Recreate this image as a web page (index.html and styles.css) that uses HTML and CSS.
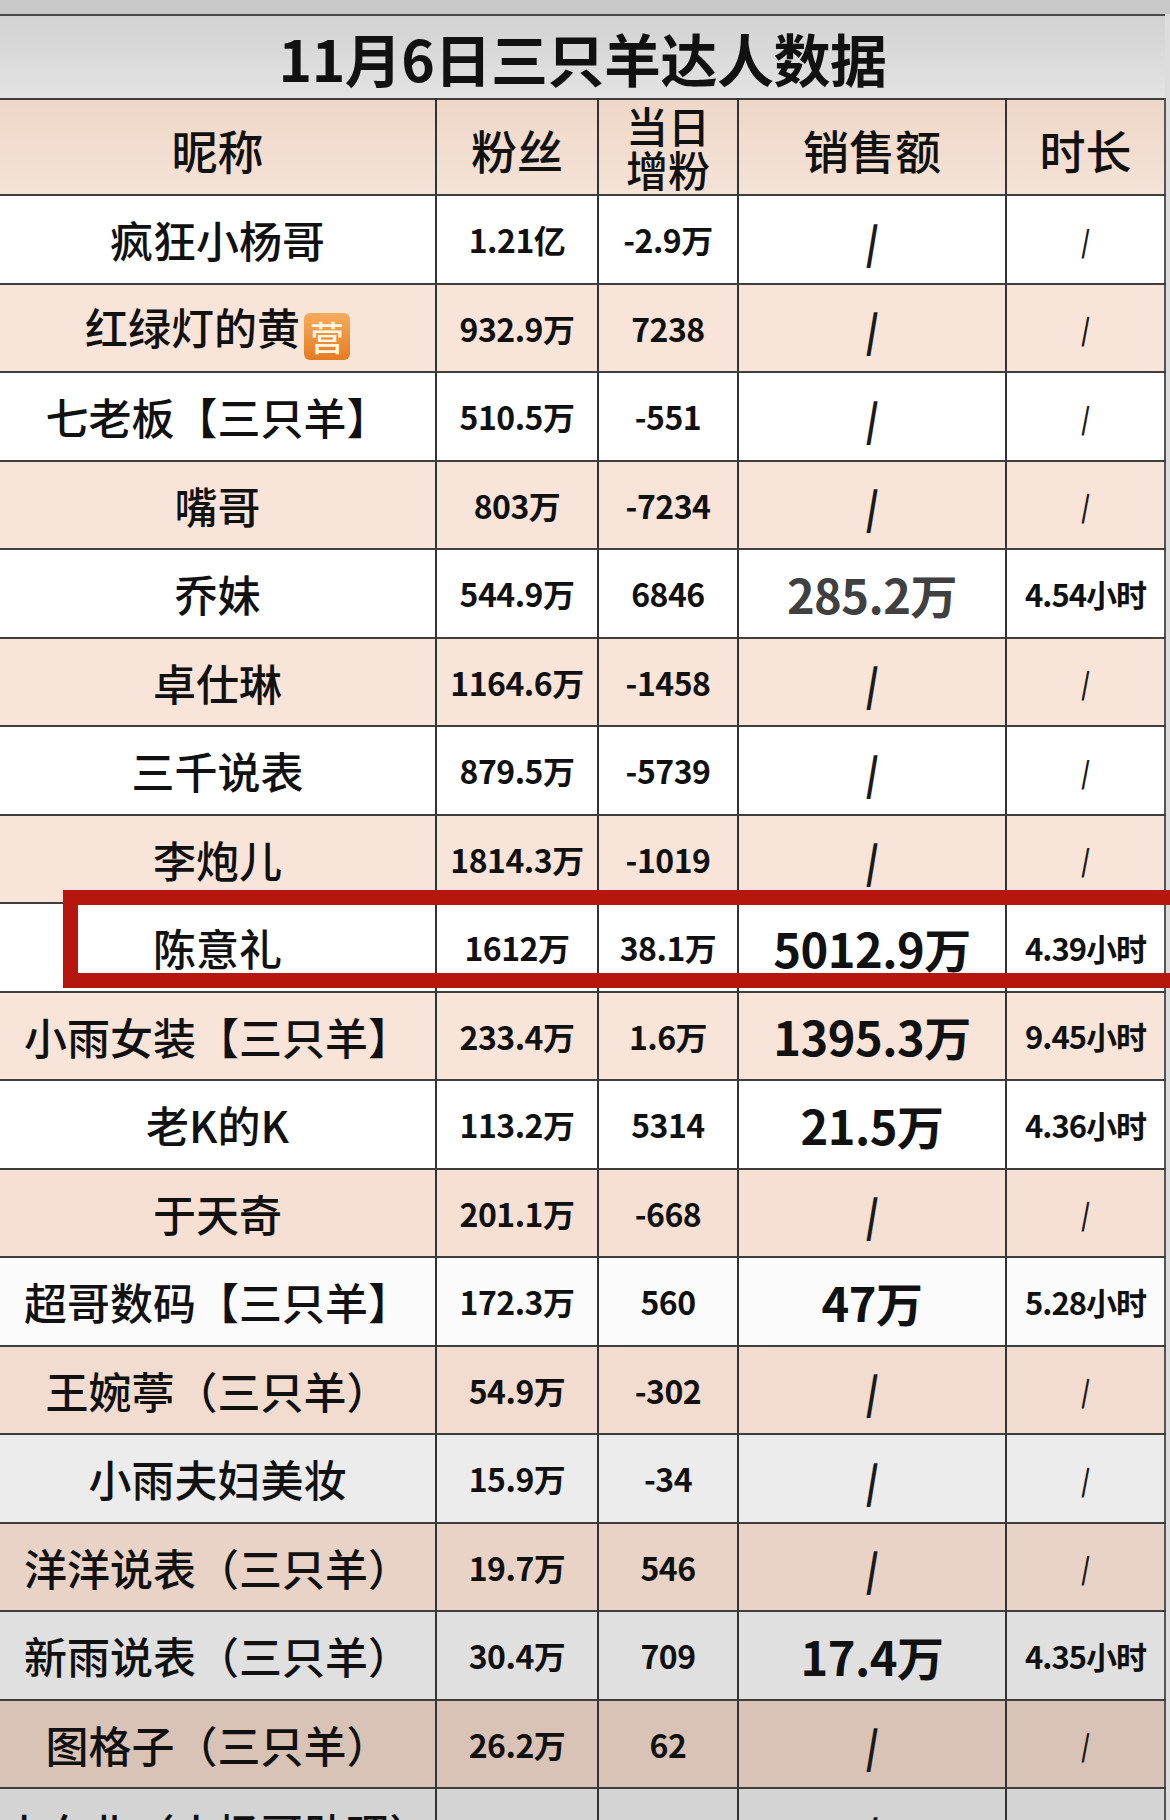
FILE: index.html
```html
<!DOCTYPE html>
<html lang="zh-CN">
<head>
<meta charset="utf-8">
<title>11月6日三只羊达人数据</title>
<link rel="stylesheet" href="styles.css">
</head>
<body>
<div class="page">
  <div class="topstrip"></div>
  <div class="sheet">
    <div class="title">11月6日三只羊达人数据</div>
    <table class="grid">
      <colgroup>
        <col class="c-name"><col class="c-fans"><col class="c-inc"><col class="c-sales"><col class="c-dur">
      </colgroup>
      <thead>
        <tr class="head">
          <th>昵称</th><th>粉丝</th><th class="two"><span class="ln">当日</span><span class="ln">增粉</span></th><th>销售额</th><th>时长</th>
        </tr>
      </thead>
      <tbody>
        <tr class="r-white"><td class="name">疯狂小杨哥</td><td class="num">1.21亿</td><td class="num">-2.9万</td><td class="sales"><span class="na">/</span></td><td class="dur"><span class="na-s">/</span></td></tr>
        <tr class="r-peach"><td class="name">红绿灯的黄<span class="badge">营</span></td><td class="num">932.9万</td><td class="num">7238</td><td class="sales"><span class="na">/</span></td><td class="dur"><span class="na-s">/</span></td></tr>
        <tr class="r-white"><td class="name">七老板【三只羊】</td><td class="num">510.5万</td><td class="num">-551</td><td class="sales"><span class="na">/</span></td><td class="dur"><span class="na-s">/</span></td></tr>
        <tr class="r-peach"><td class="name">嘴哥</td><td class="num">803万</td><td class="num">-7234</td><td class="sales"><span class="na">/</span></td><td class="dur"><span class="na-s">/</span></td></tr>
        <tr class="r-white"><td class="name">乔妹</td><td class="num">544.9万</td><td class="num">6846</td><td class="sales light">285.2万</td><td class="dur">4.54小时</td></tr>
        <tr class="r-peach"><td class="name">卓仕琳</td><td class="num">1164.6万</td><td class="num">-1458</td><td class="sales"><span class="na">/</span></td><td class="dur"><span class="na-s">/</span></td></tr>
        <tr class="r-white"><td class="name">三千说表</td><td class="num">879.5万</td><td class="num">-5739</td><td class="sales"><span class="na">/</span></td><td class="dur"><span class="na-s">/</span></td></tr>
        <tr class="r-peach"><td class="name">李炮儿</td><td class="num">1814.3万</td><td class="num">-1019</td><td class="sales"><span class="na">/</span></td><td class="dur"><span class="na-s">/</span></td></tr>
        <tr class="r-white"><td class="name">陈意礼</td><td class="num">1612万</td><td class="num">38.1万</td><td class="sales big">5012.9万</td><td class="dur">4.39小时</td></tr>
        <tr class="r-peach"><td class="name">小雨女装【三只羊】</td><td class="num">233.4万</td><td class="num">1.6万</td><td class="sales big">1395.3万</td><td class="dur">9.45小时</td></tr>
        <tr class="r-white"><td class="name">老K的K</td><td class="num">113.2万</td><td class="num">5314</td><td class="sales big">21.5万</td><td class="dur">4.36小时</td></tr>
        <tr class="r-peach2"><td class="name">于天奇</td><td class="num">201.1万</td><td class="num">-668</td><td class="sales"><span class="na">/</span></td><td class="dur"><span class="na-s">/</span></td></tr>
        <tr class="r-white2"><td class="name">超哥数码【三只羊】</td><td class="num">172.3万</td><td class="num">560</td><td class="sales big">47万</td><td class="dur">5.28小时</td></tr>
        <tr class="r-peach3"><td class="name">王婉葶（三只羊）</td><td class="num">54.9万</td><td class="num">-302</td><td class="sales"><span class="na">/</span></td><td class="dur"><span class="na-s">/</span></td></tr>
        <tr class="r-gray1"><td class="name">小雨夫妇美妆</td><td class="num">15.9万</td><td class="num">-34</td><td class="sales"><span class="na">/</span></td><td class="dur"><span class="na-s">/</span></td></tr>
        <tr class="r-peach4"><td class="name">洋洋说表（三只羊）</td><td class="num">19.7万</td><td class="num">546</td><td class="sales"><span class="na">/</span></td><td class="dur"><span class="na-s">/</span></td></tr>
        <tr class="r-gray2"><td class="name">新雨说表（三只羊）</td><td class="num">30.4万</td><td class="num">709</td><td class="sales big">17.4万</td><td class="dur">4.35小时</td></tr>
        <tr class="r-peach5"><td class="name">图格子（三只羊）</td><td class="num">26.2万</td><td class="num">62</td><td class="sales"><span class="na">/</span></td><td class="dur"><span class="na-s">/</span></td></tr>
        <tr class="r-gray3"><td class="name">小东北（小杨哥助理）</td><td class="num">12.6万</td><td class="num">18</td><td class="sales"><span class="na">/</span></td><td class="dur"><span class="na-s">/</span></td></tr>
      </tbody>
    </table>
  </div>
  <div class="highlight"></div>
</div>
</body>
</html>
```

FILE: styles.css
```css
html, body {
  margin: 0;
  padding: 0;
}
body {
  width: 1170px;
  height: 1820px;
  overflow: hidden;
  background: #dcdcdc;
  font-family: "Noto Sans CJK SC", "Noto Sans", sans-serif;
  color: #111;
}
.page {
  position: relative;
  width: 1170px;
  height: 1820px;
  overflow: hidden;
}
.topstrip {
  height: 14px;
  background: #c8c8c8;
}
.sheet {
  width: 1165px;
}
.title {
  height: 82px;
  border-top: 2px solid #4a4a4a;
  background: linear-gradient(#d2d2d2, #e3e3e3);
  font-size: 57px;
  font-weight: 700;
  line-height: 82px;
  text-align: center;
  letter-spacing: -0.5px;
}
.grid {
  width: 1165px;
  border-collapse: collapse;
  table-layout: fixed;
}
.c-name { width: 436px; }
.c-fans { width: 162px; }
.c-inc { width: 140px; }
.c-sales { width: 268px; }
.c-dur { width: 159px; }

.grid th, .grid td {
  padding: 0;
  text-align: center;
  vertical-align: middle;
  border-top: 2px solid #3e3e3e;
  border-bottom: 2px solid #3e3e3e;
  border-left: 2px solid #333;
  border-right: 2px solid #333;
  white-space: nowrap;
}
.grid td { overflow: hidden; }
.grid tr > :first-child { border-left: none; }
.grid tr > :last-child { border-right: 2px solid #555; }

.head {
  height: 96px;
  background: linear-gradient(#eed7c8, #f5e3d7);
}
.head th {
  font-size: 46px;
  font-weight: 500;
  line-height: 1;
  padding-top: 4px;
}
.head th.two {
  font-size: 42px;
  padding-top: 0;
}
.ln {
  display: block;
  height: 44px;
  line-height: 44px;
}

tbody tr { height: 88.5px; }
.r-white { background: #ffffff; }
.r-white2 { background: #fbfbfb; }
.r-peach { background: #f8e4d8; }
.r-peach2 { background: #f6e0d4; }
.r-peach3 { background: #f1dccf; }
.r-peach4 { background: #e9d3c7; }
.r-peach5 { background: #d9c3b7; }
.r-gray1 { background: #ececec; }
.r-gray2 { background: #e0e0e0; }
.r-gray3 { background: #d4d4d4; }

.name {
  font-size: 43px;
  font-weight: 500;
  letter-spacing: 0;
}
.num {
  font-size: 32px;
  font-weight: 700;
  letter-spacing: -0.5px;
}
.sales {
  font-size: 47px;
  font-weight: 700;
  letter-spacing: -0.5px;
}
.sales.light {
  color: #404040;
  font-weight: 700;
}
.dur {
  font-size: 31px;
  font-weight: 700;
  letter-spacing: -1px;
}
.na {
  display: inline-block;
  font-size: 44px;
  font-weight: 900;
  color: #1a1a1a;
  transform: scaleX(0.75);
}
.na-s {
  display: inline-block;
  font-size: 30px;
  font-weight: 700;
  color: #1a1a1a;
  transform: scaleX(0.75);
}
.badge {
  display: inline-block;
  width: 46px;
  height: 47px;
  margin-left: 4px;
  border-radius: 6px;
  background: linear-gradient(#f6ac5c, #e57b22);
  color: #fff6e4;
  font-size: 34px;
  font-weight: 500;
  line-height: 47px;
  text-align: center;
  vertical-align: -6px;
}
.highlight {
  position: absolute;
  left: 63px;
  top: 890px;
  width: 1130px;
  height: 98px;
  box-sizing: border-box;
  border: 15px solid #b5170f;
  pointer-events: none;
}
```
